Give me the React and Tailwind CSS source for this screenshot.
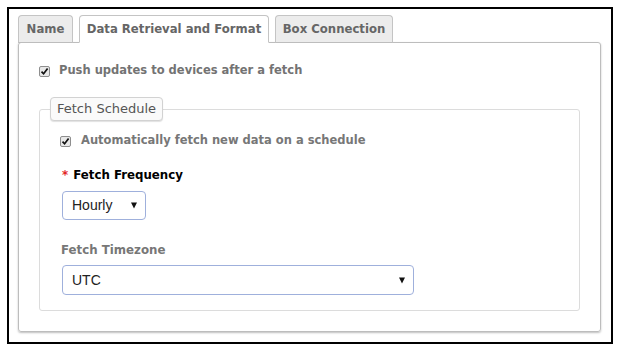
import React from "react";

// small checked box, drawn to look like the old gray native checkbox
function Check() {
  return (
    <span className="inline-flex w-[11px] h-[11px] shrink-0 items-center justify-center rounded-[2px] border border-[#8e8e8e] bg-[#e8e8e8]">
      <svg width="9" height="9" viewBox="0 0 9 9">
        <path d="M1.5 4.6 L3.6 6.8 L7.6 1.6" fill="none" stroke="#111" strokeWidth="1.7" />
      </svg>
    </span>
  );
}

function Select({ value, className }) {
  return (
    <div
      className={
        "flex items-center justify-between rounded-[4px] border border-[#9fb0dc] bg-white pl-[9px] pr-[8px] text-[14px] text-[#222] " +
        className
      }
      style={{ fontFamily: '"Liberation Sans", Arial, sans-serif' }}
    >
      <span>{value}</span>
      <svg width="6" height="7" viewBox="0 0 6 7">
        <path d="M0 0.5 H6 L3 6.5 Z" fill="#111" />
      </svg>
    </div>
  );
}

const tabs = [
  { name: "Name", w: "w-[55px]" },
  { name: "Data Retrieval and Format", w: "w-[190px]", active: true },
  { name: "Box Connection", w: "w-[118px]" },
];

export default function App() {
  return (
    <div
      className="w-[619px] h-[351px] bg-white pt-[7px] pl-[7px]"
      style={{ fontFamily: '"DejaVu Sans", Verdana, sans-serif' }}
    >
      <div className="w-[606px] h-[337px] border-2 border-black pl-[9px] pr-[10px] pt-[6px]">
        {/* tabs */}
        <div className="flex gap-[6px] relative z-10">
          {tabs.map((t) => (
            <div
              key={t.name}
              className={[
                "h-[28px] flex items-center justify-center rounded-t-[4px] border border-[#c4c4c4] pt-[2px] text-[11.7px] font-bold text-[#666]",
                t.w,
                t.active ? "bg-white border-b-white" : "bg-[#ececec] border-b-[#bdbdbd]",
              ].join(" ")}
            >
              {t.name}
            </div>
          ))}
        </div>

        {/* panel */}
        <div className="-mt-px rounded-[3px] border border-[#bdbdbd] shadow-[0_1px_2px_rgba(0,0,0,0.25)] pt-[18px] px-[20px] pb-[20px]">
          <div className="h-[20px] flex items-center gap-[9px] text-[11.5px] font-bold text-[#737373]">
            <Check />
            <span>Push updates to devices after a fetch</span>
          </div>

          <fieldset className="mt-[16px] rounded-[3px] border border-[#dcdcdc] px-[20px] pb-[15px]">
            <legend className="ml-[-10px] h-[24px] px-[6px] flex items-center rounded-[4px] border border-[#d2d2d2] bg-[#fafafa] shadow-[0_1px_1px_rgba(0,0,0,0.12)] text-[13px] text-[#555]">
              Fetch Schedule
            </legend>

            <div className="mt-[10px] h-[20px] flex items-center gap-[10px] text-[11.5px] font-bold text-[#777]">
              <Check />
              <span>Automatically fetch new data on a schedule</span>
            </div>

            <div className="mt-[15px] h-[20px] flex items-center gap-[5px] pl-[2px] text-[11.8px] font-bold text-black">
              <span className="text-[#e32626]">*</span>
              <span>Fetch Frequency</span>
            </div>

            <Select value="Hourly" className="mt-[5px] ml-[2px] w-[84px] h-[29px]" />

            <div className="mt-[21px] h-[20px] flex items-center pl-[1px] text-[11.8px] font-bold text-[#777]">
              Fetch Timezone
            </div>

            <Select value="UTC" className="mt-[4px] ml-[2px] w-[352px] h-[30px]" />
          </fieldset>
        </div>
      </div>
    </div>
  );
}
